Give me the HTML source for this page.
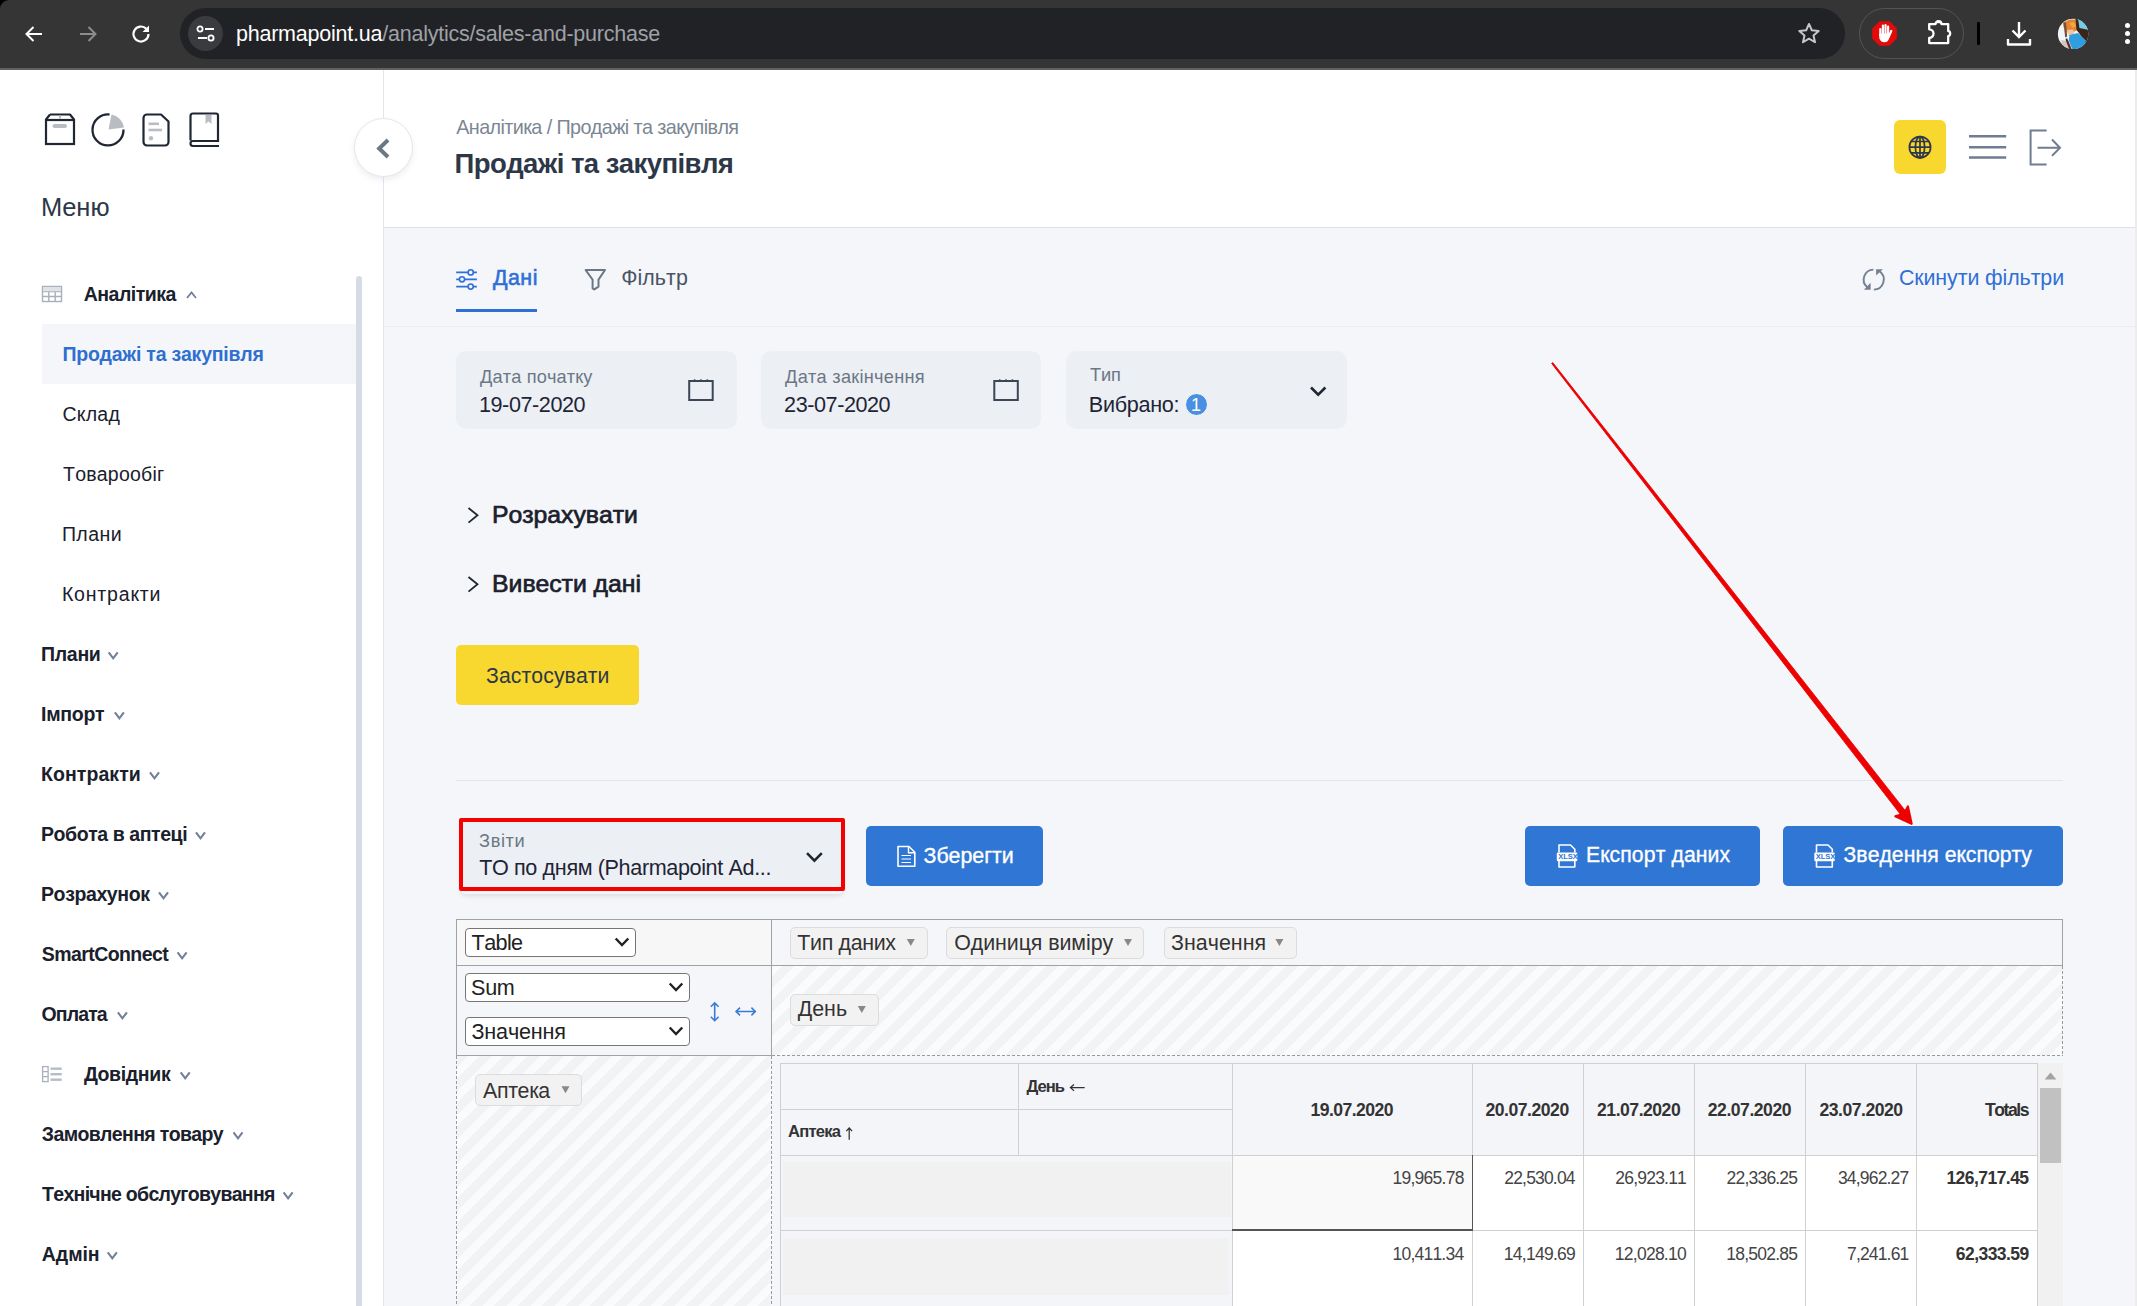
<!DOCTYPE html>
<html><head><meta charset="utf-8">
<style>
*{box-sizing:border-box;margin:0;padding:0}
html,body{width:2137px;height:1306px;overflow:hidden;background:#f5f6fa;font-family:"Liberation Sans",sans-serif;}
.a{position:absolute;white-space:nowrap;font-kerning:none}
.b{position:absolute}
svg{position:absolute;overflow:visible}
.pill{position:absolute;background:#f2f2f2;border:1px solid #dcdcdc;border-radius:5px}
.sel{position:absolute;background:#fff;border:1px solid #767676;border-radius:4px}
.hatch{position:absolute;background-color:#fafbfd}
</style></head><body>
<div class="b" style="left:0;top:0;width:2137px;height:70px;background:#353535;border-bottom:2px solid #616161"></div>
<div class="b" style="left:0;top:0;width:9px;height:9px;background:#000"></div>
<div class="b" style="left:0;top:0;width:9px;height:9px;background:#353535;border-top-left-radius:9px"></div>
<svg style="left:22px;top:22px" width="24" height="24" viewBox="0 0 24 24"><path d="M20 12H5M11.5 5L4.5 12l7 7" fill="none" stroke="#fff" stroke-width="2"/></svg>
<svg style="left:76px;top:22px" width="24" height="24" viewBox="0 0 24 24"><path d="M4 12h15M12.5 5l7 7-7 7" fill="none" stroke="#8c8c8c" stroke-width="2"/></svg>
<svg style="left:129px;top:22px" width="24" height="24" viewBox="0 0 24 24"><path d="M19.5 12a7.5 7.5 0 1 1-2.2-5.3" fill="none" stroke="#fff" stroke-width="2.2"/><path d="M20 3.5v6.5h-6.5z" fill="#fff"/></svg>
<div class="b" style="left:180px;top:8px;width:1665px;height:51px;border-radius:26px;background:#212226"></div>
<div class="b" style="left:188px;top:16px;width:35px;height:35px;border-radius:50%;background:#3a3b3e"></div>
<svg style="left:196px;top:25px" width="20" height="18" viewBox="0 0 20 18"><circle cx="4" cy="4" r="2.6" fill="none" stroke="#fff" stroke-width="1.8"/><path d="M9 4h9M2 13h9" stroke="#fff" stroke-width="1.8"/><circle cx="15" cy="13" r="2.6" fill="none" stroke="#fff" stroke-width="1.8"/></svg>
<div class="a" style="left:236px;top:19px;font-size:21.5px;line-height:30px;color:#fff;letter-spacing:-0.23px"><span>pharmapoint.ua</span><span style="color:#9ea1a6">/analytics/sales-and-purchase</span></div>
<svg style="left:1796px;top:21px" width="26" height="25" viewBox="0 0 24 24"><path d="M12 2.8l2.7 6.1 6.6.6-5 4.4 1.5 6.5L12 17l-5.8 3.4 1.5-6.5-5-4.4 6.6-.6z" fill="none" stroke="#c7c7c7" stroke-width="1.9" stroke-linejoin="round"/></svg>
<div class="b" style="left:1859px;top:8px;width:105px;height:51px;border-radius:26px;border:1.6px solid #545454"></div>
<svg style="left:0;top:0" width="1" height="1"><path d="M1877.5 21.2h10.2l7.2 7.2v10.2l-7.2 7.2h-10.2l-7.2-7.2V28.4z" fill="#e50a0a" transform="translate(1.9 0)"/>
<g stroke="#fff" stroke-linecap="round" fill="none"><path d="M1880.3 29v7M1882.9 25.6v9M1885.5 25.2v9M1888.1 26.6v8.5" stroke-width="2.2"/><path d="M1891.2 31l-2.6 6" stroke-width="2.3"/></g>
<path d="M1879.2 33.5h10.6l-.8 5.2c-.7 2.3-2.4 3.6-4.6 3.6-2.6 0-4.4-1.6-5-4z" fill="#fff"/></svg>
<svg style="left:0;top:0" width="1" height="1"><path d="M1929.2 24.1H1935.6A2.9 2.9 0 0 1 1941.4 24.1H1948.2V30.9A2.7 2.7 0 0 1 1948.2 36.1V43.1H1929.2V37.9A4.3 4.3 0 0 0 1929.2 29.3Z" fill="none" stroke="#fff" stroke-width="2.3" stroke-linejoin="round"/><path d="M1936.2 23.2a2.6 2.6 0 0 1 4.6 0z" fill="#fff"/><path d="M1949.2 31.6a2.6 2.6 0 0 1 0 3.8z" fill="#fff"/></svg>
<div class="b" style="left:1977px;top:22px;width:3px;height:23px;background:#000;border-radius:1px"></div>
<svg style="left:2006px;top:20px" width="26" height="27" viewBox="0 0 26 27"><path d="M13 2v15M6.5 10.5L13 17l6.5-6.5" fill="none" stroke="#fff" stroke-width="2.4"/><path d="M2 19v5.5h22V19" fill="none" stroke="#fff" stroke-width="2.4" stroke-linejoin="round"/></svg>
<svg style="left:0;top:0" width="1" height="1"><defs><clipPath id="av"><circle cx="2073.1" cy="33.9" r="15.2"/></clipPath></defs>
<g clip-path="url(#av)"><rect x="2057" y="18" width="32" height="32" fill="#eef6f8"/>
<path d="M2076 18H2090V31L2080 29z" fill="#72cfe4"/>
<path d="M2063 22.5L2070 19.5L2077 19.5L2078.5 26L2076.5 30.5L2071 33L2066 31.5L2063.5 27z" fill="#e2872f"/>
<path d="M2069 23L2074 22L2076 26L2073 28z" fill="#f0a848"/>
<path d="M2066.5 30L2073.5 29.5L2074 34.5L2069 36z" fill="#f1c49c"/>
<path d="M2075.5 18.5L2078 18.5L2079.5 28L2089 30V41L2085.5 43L2079 33L2076.5 30z" fill="#3b2519"/>
<path d="M2069.5 35L2078 33L2086 40.5L2084 48L2073 50L2068.5 42z" fill="#2f9de0"/>
<path d="M2063.5 22.5L2066 22.5L2067.2 36.5L2065.2 37.5z" fill="#7d4b3a"/>
<path d="M2061 40L2069.5 41.5L2072 49L2063 48z" fill="#d8c3c0"/>
<path d="M2067 38L2071.5 49L2069.5 50L2065.5 39.5z" fill="#4a2d22"/></g></svg>
<div class="b" style="left:2124.5px;top:23.1px;width:5px;height:5px;border-radius:50%;background:#fff"></div>
<div class="b" style="left:2124.5px;top:31.299999999999997px;width:5px;height:5px;border-radius:50%;background:#fff"></div>
<div class="b" style="left:2124.5px;top:39.3px;width:5px;height:5px;border-radius:50%;background:#fff"></div>
<div class="b" style="left:0;top:70px;width:383px;height:1236px;background:#fff"></div>
<div class="b" style="left:383px;top:70px;width:1px;height:1236px;background:#e2e7ee"></div>
<div class="b" style="left:384px;top:70px;width:1751px;height:158px;background:#fff;border-bottom:1px solid #dce2ea"></div>
<div class="b" style="left:2135px;top:70px;width:2px;height:1236px;background:#ececec"></div>
<svg style="left:0;top:0" width="383" height="200">
<path d="M50 114.5h20l4 5M50 114.5l-4 5" fill="none" stroke="#1f2733" stroke-width="2.2" stroke-linejoin="round"/>
<rect x="46" y="120" width="28" height="24" fill="none" stroke="#1f2733" stroke-width="2.2"/>
<rect x="52.5" y="124" width="14.5" height="4" rx="2" fill="#b9bdc3"/>
<rect x="59" y="115.5" width="2" height="3" fill="#b9bdc3"/>
<path d="M109.5 114.5A15.5 15.5 0 1 0 123.5 129.5" fill="none" stroke="#1f2733" stroke-width="2.3"/>
<path d="M108.5 129.5L111.5 114.5A15.5 15.5 0 0 1 124 127.5z" fill="#b9bdc3"/>
<path d="M147 114.5h14l7.5 7v20.5a3.5 3.5 0 0 1-3.5 3.5h-18a3.5 3.5 0 0 1-3.5-3.5v-24a3.5 3.5 0 0 1 3.5-3.5z" fill="none" stroke="#1f2733" stroke-width="2.2" stroke-linejoin="round"/>
<rect x="148.5" y="122.5" width="10.5" height="2.6" fill="#b9bdc3"/>
<rect x="148.5" y="128.7" width="13.5" height="2.6" fill="#b9bdc3"/>
<circle cx="151" cy="138.2" r="2.2" fill="#b9bdc3"/>
<path d="M190.5 140.5V116a2.5 2.5 0 0 1 2.5-2.5h23a2 2 0 0 1 2 2v25.5h-25a2.5 2.5 0 0 0 0 5h26" fill="none" stroke="#1f2733" stroke-width="2.2"/>
<path d="M205.5 115v9l3-2.5 3 2.5v-9z" fill="#b9bdc3"/>
</svg>
<div class="a" style="left:40.91px;top:195.00px;font-size:25.5px;line-height:25.5px;color:#2d3748;font-weight:normal;letter-spacing:0.011px;">Меню</div>
<div class="b" style="left:353.5px;top:118px;width:59px;height:59px;border-radius:50%;background:#fff;border:1px solid #e3e7ec;box-shadow:0 3px 6px rgba(30,40,60,0.08)"></div>
<svg style="left:370px;top:132px" width="26" height="32"><path d="M18 8L9.2 16.5 18 25" fill="none" stroke="#6b7785" stroke-width="4"/></svg>
<div class="b" style="left:356px;top:276px;width:6px;height:1040px;background:#d5dce6;border-radius:3px"></div>
<svg style="left:0;top:0" width="100" height="320"><g fill="none" stroke="#a8b0bb" stroke-width="1.4">
<rect x="42.5" y="286.5" width="19" height="15"/><path d="M42.5 291.5h19M42.5 296.5h19M48.8 286.5v15M55.2 286.5v15"/></g>
<rect x="43" y="287" width="18" height="4.3" fill="#dfe3e8"/></svg>
<div class="a" style="left:83.71px;top:285.00px;font-size:19.5px;line-height:19.5px;color:#1a202c;font-weight:bold;letter-spacing:-0.486px;">Аналітика</div>
<svg style="left:0;top:0" width="1" height="1"><path d="M187 298l4.5-5.5 4.5 5.5" fill="none" stroke="#718096" stroke-width="1.8"/></svg>
<div class="b" style="left:42px;top:324px;width:314px;height:60px;background:#f4f6f9"></div>
<div class="a" style="left:62.40px;top:345.00px;font-size:19.5px;line-height:19.5px;color:#2f6fd0;font-weight:bold;letter-spacing:-0.219px;">Продажі та закупівля</div>
<div class="a" style="left:62.51px;top:405.00px;font-size:19.5px;line-height:19.5px;color:#1a202c;font-weight:normal;letter-spacing:0.277px;">Склад</div>
<div class="a" style="left:63.06px;top:465.00px;font-size:19.5px;line-height:19.5px;color:#1a202c;font-weight:normal;letter-spacing:0.211px;">Товарообіг</div>
<div class="a" style="left:61.92px;top:525.00px;font-size:19.5px;line-height:19.5px;color:#1a202c;font-weight:normal;letter-spacing:0.433px;">Плани</div>
<div class="a" style="left:61.90px;top:585.00px;font-size:19.5px;line-height:19.5px;color:#1a202c;font-weight:normal;letter-spacing:0.825px;">Контракти</div>
<div class="a" style="left:41.00px;top:645.00px;font-size:19.5px;line-height:19.5px;color:#1a202c;font-weight:bold;letter-spacing:-0.289px;">Плани</div>
<svg style="left:0;top:0" width="1" height="1"><path d="M108.7 652.3l4.5 6l4.5 -6" fill="none" stroke="#718096" stroke-width="2.1"/></svg>
<div class="a" style="left:41.00px;top:705.00px;font-size:19.5px;line-height:19.5px;color:#1a202c;font-weight:bold;letter-spacing:-0.269px;">Імпорт</div>
<svg style="left:0;top:0" width="1" height="1"><path d="M114.9 712.3l4.5 6l4.5 -6" fill="none" stroke="#718096" stroke-width="2.1"/></svg>
<div class="a" style="left:41.00px;top:765.00px;font-size:19.5px;line-height:19.5px;color:#1a202c;font-weight:bold;letter-spacing:0.070px;">Контракти</div>
<svg style="left:0;top:0" width="1" height="1"><path d="M150 772.3l4.5 6l4.5 -6" fill="none" stroke="#718096" stroke-width="2.1"/></svg>
<div class="a" style="left:41.00px;top:825.00px;font-size:19.5px;line-height:19.5px;color:#1a202c;font-weight:bold;letter-spacing:-0.424px;">Робота в аптеці</div>
<svg style="left:0;top:0" width="1" height="1"><path d="M196 832.3l4.5 6l4.5 -6" fill="none" stroke="#718096" stroke-width="2.1"/></svg>
<div class="a" style="left:41.00px;top:885.00px;font-size:19.5px;line-height:19.5px;color:#1a202c;font-weight:bold;letter-spacing:-0.390px;">Розрахунок</div>
<svg style="left:0;top:0" width="1" height="1"><path d="M159 892.3l4.5 6l4.5 -6" fill="none" stroke="#718096" stroke-width="2.1"/></svg>
<div class="a" style="left:41.74px;top:945.00px;font-size:19.5px;line-height:19.5px;color:#1a202c;font-weight:bold;letter-spacing:-0.570px;">SmartConnect</div>
<svg style="left:0;top:0" width="1" height="1"><path d="M177.6 952.3l4.5 6l4.5 -6" fill="none" stroke="#718096" stroke-width="2.1"/></svg>
<div class="a" style="left:41.50px;top:1005.00px;font-size:19.5px;line-height:19.5px;color:#1a202c;font-weight:bold;letter-spacing:-0.879px;">Оплата</div>
<svg style="left:0;top:0" width="1" height="1"><path d="M117.9 1012.3l4.5 6l4.5 -6" fill="none" stroke="#718096" stroke-width="2.1"/></svg>
<svg style="left:0;top:0" width="100" height="1100"><g fill="none" stroke="#a8b0bb" stroke-width="1.3">
<rect x="42.6" y="1066.6" width="5.5" height="15"/><path d="M42.6 1071.6h5.5M42.6 1076.6h5.5"/></g>
<rect x="50.5" y="1067.5" width="11.2" height="2.4" fill="#b6bdc7"/><rect x="50.5" y="1073" width="11.2" height="2.4" fill="#b6bdc7"/><rect x="50.5" y="1078.5" width="11.2" height="2.4" fill="#b6bdc7"/>
</svg>
<div class="a" style="left:83.93px;top:1065.00px;font-size:19.5px;line-height:19.5px;color:#1a202c;font-weight:bold;letter-spacing:-0.336px;">Довідник</div>
<svg style="left:0;top:0" width="1" height="1"><path d="M180.7 1072.3l4.5 6l4.5 -6" fill="none" stroke="#718096" stroke-width="2.1"/></svg>
<div class="a" style="left:41.86px;top:1125.00px;font-size:19.5px;line-height:19.5px;color:#1a202c;font-weight:bold;letter-spacing:-0.636px;">Замовлення товару</div>
<svg style="left:0;top:0" width="1" height="1"><path d="M233.5 1132.3l4.5 6l4.5 -6" fill="none" stroke="#718096" stroke-width="2.1"/></svg>
<div class="a" style="left:42.08px;top:1185.00px;font-size:19.5px;line-height:19.5px;color:#1a202c;font-weight:bold;letter-spacing:-0.707px;">Технічне обслуговування</div>
<svg style="left:0;top:0" width="1" height="1"><path d="M283.6 1192.3l4.5 6l4.5 -6" fill="none" stroke="#718096" stroke-width="2.1"/></svg>
<div class="a" style="left:41.81px;top:1245.00px;font-size:19.5px;line-height:19.5px;color:#1a202c;font-weight:bold;letter-spacing:-0.058px;">Адмін</div>
<svg style="left:0;top:0" width="1" height="1"><path d="M107.8 1252.3l4.5 6l4.5 -6" fill="none" stroke="#718096" stroke-width="2.1"/></svg>
<div class="a" style="left:456.26px;top:118.00px;font-size:19.8px;line-height:19.8px;color:#7b8794;font-weight:normal;letter-spacing:-0.594px;">Аналітика / Продажі та закупівля</div>
<div class="a" style="left:454.46px;top:150.00px;font-size:27.5px;line-height:27.5px;color:#2d3748;font-weight:bold;letter-spacing:-0.554px;">Продажі та закупівля</div>
<div class="b" style="left:1894px;top:120px;width:52px;height:54px;border-radius:6px;background:#f8d82f"></div>
<svg style="left:0;top:0" width="1" height="1"><g fill="none" stroke="#2d3748" stroke-width="1.7">
<circle cx="1920" cy="147.2" r="10.6"/><ellipse cx="1920" cy="147.2" rx="4.6" ry="10.6"/><path d="M1920 136.6v21.2M1909.4 147.2h21.2M1911 141.5h18M1911 152.9h18"/></g></svg>
<svg style="left:0;top:0" width="1" height="1"><path d="M1969 136.3h37.2M1969 147.2h37.2M1969 157.5h37.2" stroke="#6e7d8f" stroke-width="2.4"/></svg>
<svg style="left:0;top:0" width="1" height="1"><path d="M2046.6 130.4h-16v34.2h16" fill="none" stroke="#6e7d8f" stroke-width="2"/><path d="M2037.5 147.7h22.5M2052 139.5l8 8.2-8 8.2" fill="none" stroke="#6e7d8f" stroke-width="2"/></svg>
<div class="b" style="left:384px;top:326px;width:1751px;height:1px;background:#eaecef"></div>
<svg style="left:0;top:0" width="1" height="1"><g stroke="#2f6fd6" stroke-width="1.7" fill="none">
<path d="M456.2 272.4h20.7M456.2 279.3h20.7M456.2 286.6h20.7"/></g>
<g fill="#f5f6fa" stroke="#2f6fd6" stroke-width="1.6"><circle cx="470.7" cy="272.4" r="2.6"/><circle cx="462" cy="279.3" r="2.6"/><circle cx="470.7" cy="286.6" r="2.6"/></g></svg>
<div class="a" style="left:492.94px;top:268.00px;font-size:21.4px;line-height:21.4px;color:#2f6fd6;font-weight:normal;letter-spacing:0.511px;-webkit-text-stroke:0.60px #2f6fd6;">Дані</div>
<div class="b" style="left:456px;top:309px;width:81px;height:3px;background:#2f6fd6"></div>
<svg style="left:0;top:0" width="1" height="1"><path d="M585.6 270H605L598.5 279.6V286.6L594.3 289.4L592.6 288.3V279.6Z" fill="none" stroke="#6b7785" stroke-width="2" stroke-linejoin="round"/></svg>
<div class="a" style="left:621.17px;top:268.00px;font-size:21.4px;line-height:21.4px;color:#4a5464;font-weight:normal;letter-spacing:0.074px;">Фільтр</div>
<svg style="left:0;top:0" width="1" height="1"><g fill="none" stroke="#738091" stroke-width="1.9"><path d="M1873.4 269.6A10 10 0 0 0 1867.2 287.2"/><path d="M1873.8 289.6A10 10 0 0 0 1879.8 271.6"/></g><g fill="#738091"><path d="M1863.9 289.7H1870.6V282.7Z"/><path d="M1876.1 269.2H1882.9L1876.1 275.6Z"/></g></svg>
<div class="a" style="left:1898.91px;top:268.00px;font-size:21.4px;line-height:21.4px;color:#2f6fd6;font-weight:normal;letter-spacing:-0.098px;">Скинути фільтри</div>
<div class="b" style="left:456px;top:351px;width:281px;height:78px;border-radius:10px;background:#eceff4"></div>
<div class="b" style="left:761px;top:351px;width:280px;height:78px;border-radius:10px;background:#eceff4"></div>
<div class="b" style="left:1066px;top:351px;width:281px;height:78px;border-radius:10px;background:#eceff4"></div>
<div class="a" style="left:480.07px;top:368.00px;font-size:18.2px;line-height:18.2px;color:#6b7785;font-weight:normal;letter-spacing:0.139px;">Дата початку</div>
<div class="a" style="left:785.07px;top:368.00px;font-size:18.2px;line-height:18.2px;color:#6b7785;font-weight:normal;letter-spacing:0.261px;">Дата закінчення</div>
<div class="a" style="left:1089.89px;top:366.00px;font-size:18.2px;line-height:18.2px;color:#6b7785;font-weight:normal;letter-spacing:-0.084px;">Тип</div>
<div class="a" style="left:478.95px;top:394.00px;font-size:21.6px;line-height:21.6px;color:#1d2535;font-weight:normal;letter-spacing:-0.422px;">19-07-2020</div>
<div class="a" style="left:784.11px;top:394.00px;font-size:21.6px;line-height:21.6px;color:#1d2535;font-weight:normal;letter-spacing:-0.440px;">23-07-2020</div>
<div class="a" style="left:1088.83px;top:394.00px;font-size:21.6px;line-height:21.6px;color:#1d2535;font-weight:normal;letter-spacing:-0.295px;">Вибрано:</div>
<svg style="left:0;top:0" width="1" height="1"><rect x="689.2" y="381" width="23.5" height="19" fill="none" stroke="#3d4654" stroke-width="2"/>
<g fill="#3d4654"><rect x="693.8000000000001" y="379.3" width="1.6" height="2"/><rect x="700.1" y="379.3" width="1.6" height="2"/><rect x="706.5" y="379.3" width="1.6" height="2"/></g></svg>
<svg style="left:0;top:0" width="1" height="1"><rect x="994.3" y="381" width="23.5" height="19" fill="none" stroke="#3d4654" stroke-width="2"/>
<g fill="#3d4654"><rect x="998.9" y="379.3" width="1.6" height="2"/><rect x="1005.1999999999999" y="379.3" width="1.6" height="2"/><rect x="1011.5999999999999" y="379.3" width="1.6" height="2"/></g></svg>
<div class="b" style="left:1185px;top:393px;width:23px;height:23px;border-radius:50%;background:#4a8fe0;border:1.5px solid #fff"></div>
<div class="a" style="left:1191.05px;top:396.00px;font-size:18px;line-height:18px;color:#fff;font-weight:normal;">1</div>
<svg style="left:0;top:0" width="1" height="1"><path d="M1311 387.5l7.2 7.2 7.2-7.2" fill="none" stroke="#1f2733" stroke-width="2.6"/></svg>
<svg style="left:0;top:0" width="1" height="1"><path d="M468.5 508l9 7.3-9 7.3" fill="none" stroke="#1f2733" stroke-width="1.8"/><path d="M468.5 577l9 7.3-9 7.3" fill="none" stroke="#1f2733" stroke-width="1.8"/></svg>
<div class="a" style="left:492.07px;top:503.00px;font-size:24.8px;line-height:24.8px;color:#1a202c;font-weight:normal;letter-spacing:-0.052px;-webkit-text-stroke:0.69px #1a202c;">Розрахувати</div>
<div class="a" style="left:492.07px;top:572.00px;font-size:24.8px;line-height:24.8px;color:#1a202c;font-weight:normal;letter-spacing:-0.039px;-webkit-text-stroke:0.69px #1a202c;">Вивести дані</div>
<div class="b" style="left:456px;top:645px;width:183px;height:60px;border-radius:5px;background:#f8d82f"></div>
<div class="a" style="left:486.11px;top:665.00px;font-size:21.2px;line-height:21.2px;color:#2d3748;font-weight:normal;letter-spacing:0.086px;">Застосувати</div>
<div class="b" style="left:456px;top:780px;width:1607px;height:1px;background:#e2e5ea"></div>
<div class="b" style="left:461px;top:822px;width:382px;height:72px;border-radius:5px;box-shadow:0 2px 5px rgba(0,0,0,0.10)"></div>
<div class="b" style="left:459px;top:818px;width:386px;height:73px;background:#eceff4;border:4.5px solid #f50000;border-radius:2px"></div>
<div class="a" style="left:479.10px;top:832.00px;font-size:18.2px;line-height:18.2px;color:#6b7785;font-weight:normal;letter-spacing:0.613px;">Звіти</div>
<div class="a" style="left:479.21px;top:857.00px;font-size:21.6px;line-height:21.6px;color:#1d2535;font-weight:normal;letter-spacing:-0.379px;">ТО по дням (Pharmapoint Ad...</div>
<svg style="left:0;top:0" width="1" height="1"><path d="M807 853.2l7.4 7.4 7.4-7.4" fill="none" stroke="#1f2733" stroke-width="2.6"/></svg>
<div class="b" style="left:866px;top:826px;width:177px;height:60px;border-radius:5px;background:#3076d4"></div>
<svg style="left:0;top:0" width="1" height="1"><path d="M898 846.5h11l5.8 5.8v14H898z" fill="none" stroke="#fff" stroke-width="1.6" stroke-linejoin="round"/><path d="M908.5 846.5v6.3h6.3" fill="none" stroke="#fff" stroke-width="1.4"/><path d="M901.5 855.5h9.5M901.5 859h9.5M901.5 862.5h9.5" stroke="#fff" stroke-width="1.2"/></svg>
<div class="a" style="left:923.50px;top:846.00px;font-size:21.4px;line-height:21.4px;color:#fff;font-weight:normal;letter-spacing:-0.024px;-webkit-text-stroke:0.34px #fff;">Зберегти</div>
<div class="b" style="left:1525px;top:826px;width:235px;height:60px;border-radius:5px;background:#3076d4"></div>
<svg style="left:0;top:0" width="1" height="1"><path d="M1559 852.5v-7.5h11.5l4.3 4.3v3.2M1559 861v6h15.8v-6" fill="none" stroke="#fff" stroke-width="1.6" stroke-linejoin="round"/>
<rect x="1556.8" y="852.6" width="20.5" height="8.6" rx="1.2" fill="#fff"/></svg>
<div class="a" style="left:1558.2px;top:852.7px;font-size:7.6px;line-height:8.4px;font-weight:bold;color:#3076d4;letter-spacing:-0.1px">XLSX</div>
<div class="a" style="left:1585.96px;top:844.00px;font-size:21.2px;line-height:21.2px;color:#fff;font-weight:normal;letter-spacing:0.107px;-webkit-text-stroke:0.34px #fff;">Експорт даних</div>
<div class="b" style="left:1783px;top:826px;width:280px;height:60px;border-radius:5px;background:#3076d4"></div>
<svg style="left:0;top:0" width="1" height="1"><path d="M1816.5 852.5v-7.5h11.5l4.3 4.3v3.2M1816.5 861v6h15.8v-6" fill="none" stroke="#fff" stroke-width="1.6" stroke-linejoin="round"/>
<rect x="1814.3" y="852.6" width="20.5" height="8.6" rx="1.2" fill="#fff"/></svg>
<div class="a" style="left:1815.7px;top:852.7px;font-size:7.6px;line-height:8.4px;font-weight:bold;color:#3076d4;letter-spacing:-0.1px">XLSX</div>
<div class="a" style="left:1843.51px;top:844.00px;font-size:21.2px;line-height:21.2px;color:#fff;font-weight:normal;letter-spacing:0.043px;-webkit-text-stroke:0.34px #fff;">Зведення експорту</div>
<div class="b" style="left:456px;top:919px;width:315px;height:46px;background:#f7f7f7"></div>
<div class="hatch" style="left:772px;top:966px;width:1291px;height:89px;background-image:repeating-linear-gradient(135deg,#fafbfd 0,#fafbfd 7.71px,#f2f3f5 7.71px,#f2f3f5 16.19px,#fafbfd 16.19px,#fafbfd 16.97px)"></div>
<div class="hatch" style="left:456px;top:1056px;width:316px;height:260px;background-image:repeating-linear-gradient(135deg,#f2f3f5 0,#f2f3f5 8.7px,#fafbfd 8.7px,#fafbfd 16.97px)"></div>
<div class="b" style="left:456px;top:919px;width:1607px;height:1px;background:#a2a2a2"></div>
<div class="b" style="left:456px;top:965px;width:1607px;height:1px;background:#a2a2a2"></div>
<div class="b" style="left:456px;top:1055px;width:316px;height:1px;background:#a2a2a2"></div>
<div class="b" style="left:456px;top:919px;width:1px;height:137px;background:#a2a2a2"></div>
<div class="b" style="left:771px;top:919px;width:1px;height:137px;background:#a2a2a2"></div>
<div class="b" style="left:2062px;top:919px;width:1px;height:47px;background:#a2a2a2"></div>
<svg style="left:0;top:0" width="1" height="1"><g stroke="#9a9a9a" stroke-width="1" stroke-dasharray="3 2" fill="none">
<path d="M772 1055.5H2063"/><path d="M2062.5 966V1055"/><path d="M456.5 1056V1310"/><path d="M771.5 1056V1310"/></g></svg>
<div class="sel" style="left:465px;top:928px;width:171px;height:29px"></div>
<div class="a" style="left:471.61px;top:932.00px;font-size:21.6px;line-height:21.6px;color:#222;font-weight:normal;letter-spacing:-0.647px;">Table</div>
<svg style="left:0;top:0" width="1" height="1"><path d="M615.7 938.5l6.3 6.6 6.3-6.6" fill="none" stroke="#222" stroke-width="2.4"/></svg>
<div class="sel" style="left:465px;top:973px;width:225px;height:29px"></div>
<div class="a" style="left:471.12px;top:977.00px;font-size:21.6px;line-height:21.6px;color:#222;font-weight:normal;letter-spacing:-0.354px;">Sum</div>
<svg style="left:0;top:0" width="1" height="1"><path d="M669.7 983.5l6.3 6.6 6.3-6.6" fill="none" stroke="#222" stroke-width="2.4"/></svg>
<div class="sel" style="left:465px;top:1017px;width:225px;height:29px"></div>
<div class="a" style="left:471.39px;top:1021.00px;font-size:21.6px;line-height:21.6px;color:#222;font-weight:normal;letter-spacing:-0.158px;">Значення</div>
<svg style="left:0;top:0" width="1" height="1"><path d="M669.7 1027.5l6.3 6.6 6.3-6.6" fill="none" stroke="#222" stroke-width="2.4"/></svg>
<svg style="left:0;top:0" width="1" height="1"><g fill="none" stroke="#3a7bd5" stroke-width="1.6">
<path d="M714.7 1003v17.5M710.8 1006.8l3.9-3.9 3.9 3.9M710.8 1016.8l3.9 3.9 3.9-3.9"/>
<path d="M736.3 1011.5h18.8M740 1007.6l-3.9 3.9 3.9 3.9M751.4 1007.6l3.9 3.9-3.9 3.9"/></g></svg>
<div class="pill" style="left:789.5px;top:926.5px;width:138px;height:32px"></div>
<div class="a" style="left:797.32px;top:933.00px;font-size:21.4px;line-height:21.4px;color:#333;font-weight:normal;letter-spacing:-0.339px;">Тип даних</div>
<svg style="left:0;top:0" width="1" height="1"><path d="M906.8 939.0h8l-4 7z" fill="#888"/></svg>
<div class="pill" style="left:946.4px;top:926.5px;width:198px;height:32px"></div>
<div class="a" style="left:954.19px;top:933.00px;font-size:21.4px;line-height:21.4px;color:#333;font-weight:normal;letter-spacing:-0.076px;">Одиниця виміру</div>
<svg style="left:0;top:0" width="1" height="1"><path d="M1124 939.0h8l-4 7z" fill="#888"/></svg>
<div class="pill" style="left:1163.5px;top:926.5px;width:133px;height:32px"></div>
<div class="a" style="left:1171.10px;top:933.00px;font-size:21.4px;line-height:21.4px;color:#333;font-weight:normal;letter-spacing:0.009px;">Значення</div>
<svg style="left:0;top:0" width="1" height="1"><path d="M1275.4 939.0h8l-4 7z" fill="#888"/></svg>
<div class="pill" style="left:789.5px;top:993.5px;width:89px;height:32px"></div>
<div class="a" style="left:797.64px;top:999.00px;font-size:21.4px;line-height:21.4px;color:#333;font-weight:normal;letter-spacing:0.057px;">День</div>
<svg style="left:0;top:0" width="1" height="1"><path d="M857.8 1006.0h8l-4 7z" fill="#888"/></svg>
<div class="pill" style="left:474.5px;top:1074px;width:107px;height:31.5px"></div>
<div class="a" style="left:482.96px;top:1081.00px;font-size:21.4px;line-height:21.4px;color:#333;font-weight:normal;letter-spacing:-0.337px;">Аптека</div>
<svg style="left:0;top:0" width="1" height="1"><path d="M561.5 1086.3h8l-4 7z" fill="#888"/></svg>
<div class="b" style="left:780px;top:1063px;width:1258px;height:260px;background:#fff"></div>
<div class="b" style="left:780px;top:1063px;width:1258px;height:92px;background:#f4f5f9"></div>
<div class="b" style="left:780px;top:1155px;width:452px;height:160px;background:#f4f5f9"></div>
<div class="b" style="left:1233px;top:1156px;width:239px;height:74px;background:#f9f9f9"></div>
<div class="b" style="left:783px;top:1162px;width:448px;height:55px;background:#f1f1f1"></div>
<div class="b" style="left:783px;top:1238px;width:446px;height:57px;background:#f1f1f1"></div>
<div class="b" style="left:780px;top:1063px;width:1258px;height:1px;background:#d0d0d0"></div>
<div class="b" style="left:780px;top:1109px;width:453px;height:1px;background:#d0d0d0"></div>
<div class="b" style="left:780px;top:1155px;width:1258px;height:1px;background:#d0d0d0"></div>
<div class="b" style="left:780px;top:1230px;width:1258px;height:1px;background:#d0d0d0"></div>
<div class="b" style="left:780px;top:1063px;width:1px;height:260px;background:#d0d0d0"></div>
<div class="b" style="left:1018px;top:1063px;width:1px;height:93px;background:#d0d0d0"></div>
<div class="b" style="left:1232px;top:1063px;width:1px;height:260px;background:#d0d0d0"></div>
<div class="b" style="left:1472px;top:1063px;width:1px;height:260px;background:#d0d0d0"></div>
<div class="b" style="left:1583px;top:1063px;width:1px;height:260px;background:#d0d0d0"></div>
<div class="b" style="left:1694px;top:1063px;width:1px;height:260px;background:#d0d0d0"></div>
<div class="b" style="left:1805px;top:1063px;width:1px;height:260px;background:#d0d0d0"></div>
<div class="b" style="left:1916px;top:1063px;width:1px;height:260px;background:#d0d0d0"></div>
<div class="b" style="left:2037px;top:1063px;width:1px;height:260px;background:#d0d0d0"></div>
<div class="b" style="left:1232px;top:1229px;width:241px;height:1.5px;background:#555"></div>
<div class="b" style="left:1471.5px;top:1155px;width:1.5px;height:75px;background:#555"></div>
<div class="a" style="left:1026.55px;top:1079.00px;font-size:16.6px;line-height:16.6px;color:#333;font-weight:bold;letter-spacing:-0.985px;">День</div>
<div class="a" style="left:787.99px;top:1124.00px;font-size:16.6px;line-height:16.6px;color:#333;font-weight:bold;letter-spacing:-0.802px;">Аптека</div>
<svg style="left:0;top:0" width="1" height="1"><g fill="none" stroke="#333" stroke-width="1.25"><path d="M1070.2 1087.6h14.5M1074 1084.5l-3.6 3.1 3.6 3.1"/><path d="M849.2 1127.9v11.8M846.3 1131.2l2.9-3.2 2.9 3.2"/></g></svg>
<div class="a" style="left:1310.59px;top:1102.00px;font-size:17.6px;line-height:17.6px;color:#333;font-weight:bold;letter-spacing:-0.562px;">19.07.2020</div>
<div class="a" style="left:1485.39px;top:1102.00px;font-size:17.6px;line-height:17.6px;color:#333;font-weight:bold;letter-spacing:-0.473px;">20.07.2020</div>
<div class="a" style="left:1597.09px;top:1102.00px;font-size:17.6px;line-height:17.6px;color:#333;font-weight:bold;letter-spacing:-0.495px;">21.07.2020</div>
<div class="a" style="left:1707.79px;top:1102.00px;font-size:17.6px;line-height:17.6px;color:#333;font-weight:bold;letter-spacing:-0.484px;">22.07.2020</div>
<div class="a" style="left:1819.39px;top:1102.00px;font-size:17.6px;line-height:17.6px;color:#333;font-weight:bold;letter-spacing:-0.484px;">23.07.2020</div>
<div class="a" style="left:1985.00px;top:1102.00px;font-size:17.6px;line-height:17.6px;color:#333;font-weight:bold;letter-spacing:-1.462px;">Totals</div>
<div class="a" style="left:1392.47px;top:1170.00px;font-size:17.5px;line-height:17.5px;color:#444;font-weight:normal;letter-spacing:-0.745px;">19,965.78</div>
<div class="a" style="left:1504.32px;top:1170.00px;font-size:17.5px;line-height:17.5px;color:#444;font-weight:normal;letter-spacing:-0.832px;">22,530.04</div>
<div class="a" style="left:1615.32px;top:1170.00px;font-size:17.5px;line-height:17.5px;color:#444;font-weight:normal;letter-spacing:-0.790px;">26,923.11</div>
<div class="a" style="left:1726.62px;top:1170.00px;font-size:17.5px;line-height:17.5px;color:#444;font-weight:normal;letter-spacing:-0.805px;">22,336.25</div>
<div class="a" style="left:1837.93px;top:1170.00px;font-size:17.5px;line-height:17.5px;color:#444;font-weight:normal;letter-spacing:-0.813px;">34,962.27</div>
<div class="a" style="left:1946.40px;top:1170.00px;font-size:17.5px;line-height:17.5px;color:#333;font-weight:bold;letter-spacing:-0.544px;">126,717.45</div>
<div class="a" style="left:1392.47px;top:1246.00px;font-size:17.5px;line-height:17.5px;color:#444;font-weight:normal;letter-spacing:-0.776px;">10,411.34</div>
<div class="a" style="left:1503.87px;top:1246.00px;font-size:17.5px;line-height:17.5px;color:#444;font-weight:normal;letter-spacing:-0.736px;">14,149.69</div>
<div class="a" style="left:1614.87px;top:1246.00px;font-size:17.5px;line-height:17.5px;color:#444;font-weight:normal;letter-spacing:-0.755px;">12,028.10</div>
<div class="a" style="left:1726.17px;top:1246.00px;font-size:17.5px;line-height:17.5px;color:#444;font-weight:normal;letter-spacing:-0.748px;">18,502.85</div>
<div class="a" style="left:1847.00px;top:1246.00px;font-size:17.5px;line-height:17.5px;color:#444;font-weight:normal;letter-spacing:-0.838px;">7,241.61</div>
<div class="a" style="left:1955.86px;top:1246.00px;font-size:17.5px;line-height:17.5px;color:#333;font-weight:bold;letter-spacing:-0.558px;">62,333.59</div>
<div class="b" style="left:2038px;top:1063px;width:25px;height:260px;background:#f1f1f1"></div>
<div class="b" style="left:2040px;top:1088px;width:21px;height:75px;background:#c1c1c1"></div>
<svg style="left:0;top:0" width="1" height="1"><path d="M2044.7 1079.4l5.85-6.9 5.85 6.9z" fill="#a3a3a3"/></svg>
<svg style="left:0;top:0" width="1" height="1"><g fill="#ee0000" stroke="#ee0000" stroke-linejoin="round"><polygon points="1551.6,363.4 1901.8,816.2 1906.7,812.4 1552.8,362.6" stroke-width="0.8"/><polygon points="1911.6,823.8 1895.3,816.2 1903.9,813.9 1907.9,806.4" stroke-width="2.2"/></g></svg>
</body></html>
